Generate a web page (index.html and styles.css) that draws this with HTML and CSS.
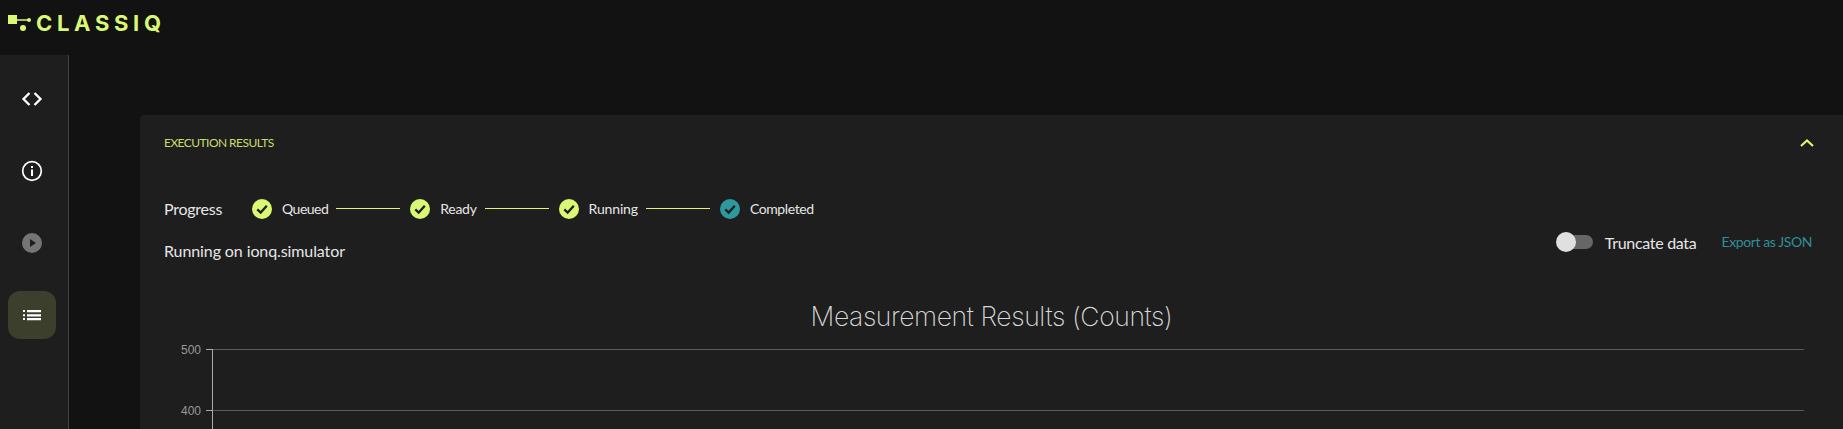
FILE: index.html
```html
<!DOCTYPE html>
<html lang="en">
<head>
<meta charset="utf-8">
<title>Classiq</title>
<link rel="stylesheet" href="styles.css">
</head>
<body>
<header class="topbar">
  <svg class="logo-mark" width="30" height="20" viewBox="0 0 30 20"><rect x="0" y="0" width="9" height="9" fill="#dbf875"/><path d="M9 5H20" stroke="#dbf875" stroke-width="1.5"/><circle cx="21" cy="5" r="2" fill="#dbf875"/><circle cx="15" cy="13" r="3" fill="#dbf875"/></svg>
  <span class="logo-text">CLASSIQ</span>
</header>
<div class="body-row">
  <nav class="sidebar">
    <button class="nav-btn"><svg width="24" height="24" viewBox="0 0 24 24"><path d="M9.5 6L3.5 12L9.5 18M14.5 6L20.5 12L14.5 18" fill="none" stroke="#fff" stroke-width="2.3"/></svg></button>
    <button class="nav-btn"><svg width="24" height="24" viewBox="0 0 24 24"><circle cx="12" cy="12" r="9.3" fill="none" stroke="#fff" stroke-width="1.7"/><rect x="11" y="10.5" width="2" height="6.5" fill="#fff"/><rect x="11" y="7" width="2" height="2" fill="#fff"/></svg></button>
    <button class="nav-btn"><svg width="24" height="24" viewBox="0 0 24 24"><circle cx="12" cy="12" r="10" fill="#757575"/><path d="M10 8L16 12L10 16Z" fill="#1e1e1e"/></svg></button>
    <button class="nav-btn active"><svg width="24" height="24" viewBox="0 0 24 24"><path d="M3 7h2v2H3zM3 11.2h2v2H3zM3 15h2v2H3zM7 7h14v2.2H7zM7 11.2h14v2.2H7zM7 15h14v2.2H7z" fill="#fff"/></svg></button>
  </nav>
  <main class="content">
    <section class="panel">
      <div class="panel-header">
        <span class="panel-title">EXECUTION RESULTS</span>
        <svg class="chevron" width="24" height="24" viewBox="0 0 24 24"><path d="M6 15L12 9.5L18 15" fill="none" stroke="#dbf875" stroke-width="2.2"/></svg>
      </div>
      <div class="info-row">
        <div class="info-left">
          <div class="progress">
            <span class="progress-label">Progress</span>
            <div class="step"><svg class="check" width="20" height="20" viewBox="0 0 20 20"><circle cx="10" cy="10" r="10" fill="#dbf875"/><path d="M5.3 10.3L8.7 13.5L14.8 6.8" fill="none" stroke="#1e1e1e" stroke-width="2.3"/></svg><span class="step-queued">Queued</span></div>
            <div class="connector"></div>
            <div class="step"><svg class="check" width="20" height="20" viewBox="0 0 20 20"><circle cx="10" cy="10" r="10" fill="#dbf875"/><path d="M5.3 10.3L8.7 13.5L14.8 6.8" fill="none" stroke="#1e1e1e" stroke-width="2.3"/></svg><span>Ready</span></div>
            <div class="connector"></div>
            <div class="step"><svg class="check" width="20" height="20" viewBox="0 0 20 20"><circle cx="10" cy="10" r="10" fill="#dbf875"/><path d="M5.3 10.3L8.7 13.5L14.8 6.8" fill="none" stroke="#1e1e1e" stroke-width="2.3"/></svg><span class="step-running">Running</span></div>
            <div class="connector"></div>
            <div class="step"><svg class="check" width="20" height="20" viewBox="0 0 20 20"><circle cx="10" cy="10" r="10" fill="#2e98a0"/><path d="M5.3 10.3L8.7 13.5L14.8 6.8" fill="none" stroke="#1e1e1e" stroke-width="2.3"/></svg><span class="step-completed">Completed</span></div>
          </div>
          <div class="running-on">Running on ionq.simulator</div>
        </div>
        <div class="actions">
          <div class="toggle"><span class="track"></span><span class="thumb"></span></div>
          <span class="toggle-label">Truncate data</span>
          <a class="export">Export as JSON</a>
        </div>
      </div>
      <h2 class="chart-title">Measurement Results (Counts)</h2>
      <svg class="chart" width="1679" height="96" viewBox="0 0 1679 96">
        <g stroke="#5a5a5a" stroke-width="1"><path d="M48 15.5H1640M48 76.5H1640"/></g>
        <g stroke="#aaa" stroke-width="1"><path d="M42 15.5H48.5M42 76.5H48.5M48.5 15V96"/></g>
        <text class="tick-label" x="37" y="20">500</text>
        <text class="tick-label" x="37" y="81">400</text>
      </svg>
    </section>
  </main>
</div>
</body>
</html>
```
FILE: styles.css
```css
* { box-sizing: border-box; }
html, body { margin: 0; height: 100%; }
body {
  background: #121212;
  color: #e6e6e6;
  font-family: Lato, "Noto Sans", sans-serif;
  overflow: hidden;
  display: flex;
  flex-direction: column;
}
.topbar {
  height: 55px;
  flex: none;
  display: flex;
  align-items: flex-start;
  padding: 15px 0 0 8px;
}
.logo-mark { flex: none; }
.logo-text {
  margin-left: -2px;
  margin-top: -5px;
  font-family: Inter, sans-serif;
  font-weight: 700;
  font-size: 22px;
  line-height: 26px;
  letter-spacing: 4.7px;
  color: #dbf875;
}
.body-row { flex: 1; display: flex; min-height: 0; }
.sidebar {
  width: 69px;
  flex: none;
  background: #1e1e1e;
  border-right: 1px solid #444;
  display: flex;
  flex-direction: column;
  gap: 24px;
  padding: 20px 0 0 8px;
}
.nav-btn {
  width: 48px;
  height: 48px;
  padding: 0;
  border: 0;
  border-radius: 12px;
  background: none;
  display: flex;
  align-items: center;
  justify-content: center;
}
.nav-btn.active { background: #3c3f2c; }
.content { flex: 1; min-width: 0; padding: 60px 0 0 71px; }
.panel {
  background: #1e1e1e;
  border-radius: 4px 0 0 0;
  padding: 0 24px;
  height: 100%;
}
.panel-header {
  height: 55px;
  display: flex;
  align-items: center;
  justify-content: space-between;
}
.panel-title { font-size: 12px; letter-spacing: -0.55px; color: #c8dc6c; }
.chevron { margin-right: 0; }
.info-row {
  display: flex;
  justify-content: space-between;
  padding-top: 19px;
}
.progress { display: flex; align-items: center; height: 40px; }
.progress-label { width: 88px; font-size: 16px; letter-spacing: -0.25px; margin-bottom: 1px; }
.step { display: flex; align-items: center; gap: 10px; font-size: 14px; letter-spacing: -0.3px; }
.step span { margin-bottom: 1px; }
.step .step-queued { letter-spacing: -0.5px; }
.step .step-running { letter-spacing: -0.15px; }
.step .step-completed { letter-spacing: -0.4px; }
.check { flex: none; }
.connector { width: 64px; height: 1px; background: #dbf875; margin: 0 10px 2px 8px; }
.running-on { margin-top: 10px; font-size: 16px; line-height: 24px; letter-spacing: -0.1px; }
.actions {
  display: flex;
  align-items: center;
  height: 24px;
  margin-top: 41px;
  margin-right: 7px;
}
.toggle { width: 37px; height: 20px; display: flex; align-items: center; }
.track { width: 26px; height: 14px; border-radius: 7px; background: #666; margin-left: 11px; flex: none; }
.thumb { width: 20px; height: 20px; border-radius: 50%; background: #e0e0e0; margin-left: -37px; flex: none; }
.toggle-label { margin-left: 12px; font-size: 16px; letter-spacing: -0.3px; }
.export { margin-left: 25px; margin-bottom: 1px; font-size: 14px; letter-spacing: -0.4px; color: #2f8f96; }
.chart-title {
  margin: 36px 0 0;
  height: 35px;
  line-height: 34px;
  text-align: center;
  font-family: Inter, sans-serif;
  font-weight: 200;
  font-size: 26.5px;
  letter-spacing: -0.4px;
  color: #d8d8d8;
}
.chart { display: block; }
.tick-label { font-family: "Liberation Sans", sans-serif; font-size: 12px; fill: #999; text-anchor: end; }
```
